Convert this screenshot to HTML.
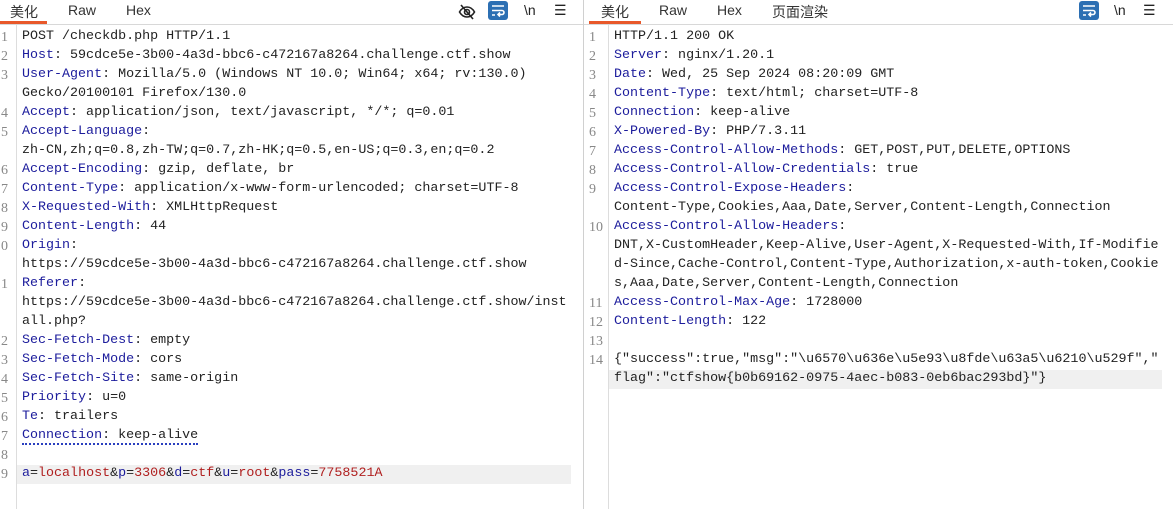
<!DOCTYPE html>
<html><head><meta charset="utf-8"><style>
body{margin:0;width:1173px;height:509px;background:#fff;overflow:hidden;position:relative;font-family:"Liberation Mono","Noto Sans CJK SC",monospace;}
.tabs{position:absolute;top:0;height:24px;border-bottom:1px solid #d8d8d8;font-family:"Liberation Sans","Noto Sans CJK SC",sans-serif;font-size:14px;color:#333}
.tab{position:absolute;top:2px;}
.ul{position:absolute;top:21px;height:3px;background:#e8582a}
.row{position:absolute;height:19px;line-height:19px;font-size:13.35px;white-space:pre;color:#222}
.num{position:absolute;font-size:14px;color:#888;line-height:19px;height:19px;font-family:"Liberation Serif",serif}
.k{color:#1c1c9c}.v{color:#b02020}
.ic{position:absolute;top:2px;font-family:"Liberation Sans",sans-serif;font-size:14px;color:#222}
.wb{position:absolute;top:1px;width:20px;height:19px;background:#2c6fb3;border-radius:3px}
</style></head><body>
<div class="tabs" style="left:0;width:583px">
<span class="tab" style="left:10px">美化</span><span class="tab" style="left:68px">Raw</span><span class="tab" style="left:126px">Hex</span>
<div class="ul" style="left:0;width:47px"></div>
</div>
<div class="tabs" style="left:584px;width:589px">
<span class="tab" style="left:17px">美化</span><span class="tab" style="left:75px">Raw</span><span class="tab" style="left:133px">Hex</span><span class="tab" style="left:188px">页面渲染</span>
<div class="ul" style="left:5px;width:52px"></div>
</div>
<div style="position:absolute;left:583px;top:0;width:1px;height:509px;background:#d0d0d0"></div>
<div style="position:absolute;left:16px;top:25px;width:1px;height:484px;background:#ddd"></div>
<div style="position:absolute;left:608px;top:25px;width:1px;height:484px;background:#ddd"></div>
<!-- icons left -->
<svg style="position:absolute;left:458px;top:3px" width="18" height="18" viewBox="0 0 18 18" fill="none" stroke="#222" stroke-width="1.6"><path d="M1.5 9c2-3.5 4.5-5 7.5-5s5.5 1.5 7.5 5c-2 3.5-4.5 5-7.5 5S3.5 12.5 1.5 9z"/><circle cx="9" cy="9" r="2.5"/><path d="M3 2l12 14"/></svg>
<div class="wb" style="left:488px"></div>
<svg style="position:absolute;left:490px;top:3px" width="16" height="15" viewBox="0 0 16 15" fill="none" stroke="#fff" stroke-width="1.6"><path d="M2 3h12M2 7.5h10a2 2 0 010 4H8M10 9.5l-2 2 2 2M2 12h3"/></svg>
<span class="ic" style="left:524px">\n</span><span class="ic" style="left:554px">☰</span>
<div class="wb" style="left:1079px"></div>
<svg style="position:absolute;left:1081px;top:3px" width="16" height="15" viewBox="0 0 16 15" fill="none" stroke="#fff" stroke-width="1.6"><path d="M2 3h12M2 7.5h10a2 2 0 010 4H8M10 9.5l-2 2 2 2M2 12h3"/></svg>
<span class="ic" style="left:1114px">\n</span><span class="ic" style="left:1143px">☰</span>
<!-- highlights -->
<div style="position:absolute;left:17px;top:465px;width:554px;height:19px;background:#f0f0f0"></div>
<div style="position:absolute;left:609px;top:370px;width:553px;height:19px;background:#f0f0f0"></div>
<div id="L"></div><div id="R"></div>
<script>
function put(id,x,nx,rows){var h='';rows.forEach(function(r,i){var t=27+i*19;if(r[0]!=='')h+='<div class="num" style="left:'+nx+'px;top:'+(t+1)+'px">'+r[0]+'</div>';h+='<div class="row" style="left:'+x+'px;top:'+t+'px">'+r[1]+'</div>';});document.getElementById(id).innerHTML=h;}
function k(a,b){return '<span class="k">'+a+'</span>: '+b;}
put('L',22,1,[
['1','POST /checkdb.php HTTP/1.1'],
['2',k('Host','59cdce5e-3b00-4a3d-bbc6-c472167a8264.challenge.ctf.show')],
['3',k('User-Agent','Mozilla/5.0 (Windows NT 10.0; Win64; x64; rv:130.0)')],
['','Gecko/20100101 Firefox/130.0'],
['4',k('Accept','application/json, text/javascript, */*; q=0.01')],
['5','<span class="k">Accept-Language</span>:'],
['','zh-CN,zh;q=0.8,zh-TW;q=0.7,zh-HK;q=0.5,en-US;q=0.3,en;q=0.2'],
['6',k('Accept-Encoding','gzip, deflate, br')],
['7',k('Content-Type','application/x-www-form-urlencoded; charset=UTF-8')],
['8',k('X-Requested-With','XMLHttpRequest')],
['9',k('Content-Length','44')],
['0','<span class="k">Origin</span>:'],
['','https://59cdce5e-3b00-4a3d-bbc6-c472167a8264.challenge.ctf.show'],
['1','<span class="k">Referer</span>:'],
['','https://59cdce5e-3b00-4a3d-bbc6-c472167a8264.challenge.ctf.show/inst'],
['','all.php?'],
['2',k('Sec-Fetch-Dest','empty')],
['3',k('Sec-Fetch-Mode','cors')],
['4',k('Sec-Fetch-Site','same-origin')],
['5',k('Priority','u=0')],
['6',k('Te','trailers')],
['7','<span style="border-bottom:2px dotted #2a3fbf">'+k('Connection','keep-alive')+'</span>'],
['8',''],
['9','<span class="k">a</span>=<span class="v">localhost</span>&amp;<span class="k">p</span>=<span class="v">3306</span>&amp;<span class="k">d</span>=<span class="v">ctf</span>&amp;<span class="k">u</span>=<span class="v">root</span>&amp;<span class="k">pass</span>=<span class="v">7758521A</span>']
]);
put('R',614,589,[
['1','HTTP/1.1 200 OK'],
['2',k('Server','nginx/1.20.1')],
['3',k('Date','Wed, 25 Sep 2024 08:20:09 GMT')],
['4',k('Content-Type','text/html; charset=UTF-8')],
['5',k('Connection','keep-alive')],
['6',k('X-Powered-By','PHP/7.3.11')],
['7',k('Access-Control-Allow-Methods','GET,POST,PUT,DELETE,OPTIONS')],
['8',k('Access-Control-Allow-Credentials','true')],
['9','<span class="k">Access-Control-Expose-Headers</span>:'],
['','Content-Type,Cookies,Aaa,Date,Server,Content-Length,Connection'],
['10','<span class="k">Access-Control-Allow-Headers</span>:'],
['','DNT,X-CustomHeader,Keep-Alive,User-Agent,X-Requested-With,If-Modifie'],
['','d-Since,Cache-Control,Content-Type,Authorization,x-auth-token,Cookie'],
['','s,Aaa,Date,Server,Content-Length,Connection'],
['11',k('Access-Control-Max-Age','1728000')],
['12',k('Content-Length','122')],
['13',''],
['14','{"success":true,"msg":"\\u6570\\u636e\\u5e93\\u8fde\\u63a5\\u6210\\u529f","'],
['','flag":"ctfshow{b0b69162-0975-4aec-b083-0eb6bac293bd}"}']
]);
</script>
</body></html>
